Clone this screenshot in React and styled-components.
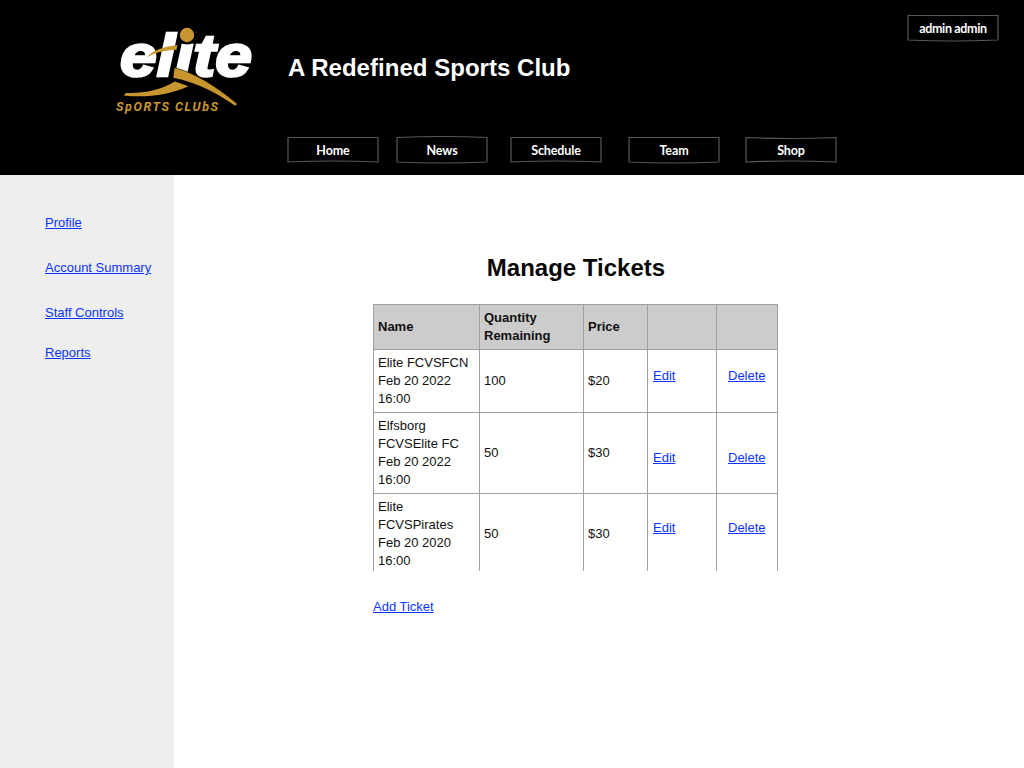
import React from "react";
import styled, { createGlobalStyle } from "styled-components";

const Global = createGlobalStyle`
  * { box-sizing: border-box; }
  body { margin: 0; background: #fff; font-family: "Liberation Sans", Arial, sans-serif; font-size: 13px; line-height: 18px; color: #111; }
  #root { display: flex; }
`;

const Page = styled.div`
  width: 1024px;
  height: 768px;
  display: flex;
  flex-direction: column;
  overflow: hidden;
`;

const Header = styled.header`
  flex: none;
  height: 175px;
  background: #000;
  color: #fff;
  display: flex;
  padding: 14px 25px 0 112px;
`;

const Brand = styled.div`
  width: 176px;
`;

const HeaderMain = styled.div`
  flex: 1;
  padding-top: 38px;
`;

const Tagline = styled.h1`
  margin: 0 0 52px;
  font-size: 24px;
  line-height: 32px;
  letter-spacing: 0.03px;
  white-space: nowrap;
`;

const Nav = styled.nav`
  display: flex;
`;

const SketchButton = styled.button`
  position: relative;
  flex: none;
  width: 92px;
  height: 28px;
  margin: 0 ${(p) => p.$gap || 0}px 0 -1px;
  padding: 2px 0 0;
  border: 0;
  background: none;
  color: #fff;
  font: 700 12.5px/26px Lato, sans-serif;
  letter-spacing: ${(p) => p.$track || 0}px;
  text-align: center;
  white-space: nowrap;
`;

const Outline = styled.svg`
  position: absolute;
  inset: 0;
  overflow: visible;
`;

const Body = styled.div`
  flex: 1;
  display: flex;
`;

const Sidebar = styled.aside`
  width: 174px;
  background: #eee;
  padding: 39px 0 0 45px;
  display: flex;
  flex-direction: column;
  align-items: flex-start;
`;

const Link = styled.a`
  color: #0b35ff;
  text-decoration: underline;
  white-space: nowrap;
`;

const SideLink = styled(Link)`
  margin-bottom: ${(p) => p.$space}px;
`;

const Main = styled.main`
  padding: 77px 0 0 199px;
`;

const Title = styled.h2`
  width: 406px;
  margin: 0 0 20px;
  font-size: 24px;
  line-height: 32px;
  color: #080808;
  text-align: center;
`;

const TableWindow = styled.div`
  height: 267px;
  overflow: hidden;
  margin-bottom: 27px;
`;

const Table = styled.div`
  width: 405px;
  border: 1px solid #a0a0a0;
  border-bottom: 0;
`;

const Row = styled.div`
  display: grid;
  grid-template-columns: 106px 104px 64px 69px 60px;
  height: ${(p) => p.$height}px;
  border-bottom: 1px solid #a0a0a0;
  background: ${(p) => (p.$head ? "#ccc" : "#fff")};
  font-weight: ${(p) => (p.$head ? 700 : 400)};
`;

const Cell = styled.div`
  display: flex;
  align-items: center;
  white-space: pre-line;
  padding-left: 4px;
  border-right: 1px solid #a0a0a0;
  &:last-child { border-right: 0; }
`;

const ActionCell = styled(Cell)`
  align-items: flex-start;
  padding: ${(p) => p.$top}px 0 0 ${(p) => p.$left}px;
`;

const ORANGE = "#c8962f";

function Logo() {
  return (
    <svg width="146" height="106" viewBox="112 14 146 106">
      <text x="120" y="75.5" fill="#fff" stroke="#fff" strokeWidth="2.6" fontFamily="Liberation Sans" fontWeight="700" fontStyle="italic" fontSize="59" textLength="132" lengthAdjust="spacingAndGlyphs">elite</text>
      <circle cx="187" cy="35" r="9.500" fill="#000" />
      <circle cx="187" cy="35" r="7.2" fill={ORANGE} />
      <path d="M146.700 57.500C152 50.500 164 46.500 177.500 45L176.500 49.800C164 50.500 155 52.500 146.700 57.500Z" fill={ORANGE} />
      <path d="M174.300 67.500C195 73 216 86 237.500 104L235 106C216 93 198 83 173 78Z" fill={ORANGE} stroke="#000" strokeWidth="0.6" />
      <path d="M175 81.500L188.500 86.200C168 95 147 98 123.500 95.500L126 93C145 93.500 160 90 175 81.500Z" fill={ORANGE} />
      <text x="116" y="110.500" fill={ORANGE} fontFamily="Roboto" fontWeight="700" fontStyle="italic" fontSize="12.5" textLength="102">SpORTS CLUbS</text>
    </svg>
  );
}

function Sketch({ label, top = 0, bottom = 0, gap, track }) {
  return (
    <SketchButton $gap={gap} $track={track}>
      <Outline width="92" height="28">
        <path
          d={`M1 1.500Q46 ${1.5 + top} 91 1.500V26Q46 ${26 + bottom} 1 26Z`}
          fill="none"
          stroke="#585858"
          strokeWidth="1.2"
          strokeLinejoin="round"
        />
      </Outline>
      {label}
    </SketchButton>
  );
}

const tickets = [
  { name: "Elite FCVSFCN\nFeb 20 2022\n16:00", qty: 100, price: "$20", height: 63, top: 17 },
  { name: "Elfsborg\nFCVSElite FC\nFeb 20 2022\n16:00", qty: 50, price: "$30", height: 81, top: 36 },
  { name: "Elite\nFCVSPirates\nFeb 20 2020\n16:00", qty: 50, price: "$30", height: 81, top: 25 },
];

export default function App() {
  return (
    <Page>
      <Global />
      <Header>
        <Brand><Logo /></Brand>
        <HeaderMain>
          <Tagline>A Redefined Sports Club</Tagline>
          <Nav>
            <Sketch label="Home" bottom={-2} gap={18} track={-0.1} />
            <Sketch label="News" top={-2} bottom={2} gap={23} track={-0.1} />
            <Sketch label="Schedule" bottom={-2} gap={27} track={-0.1} />
            <Sketch label="Team" bottom={2} gap={26} track={-0.1} />
            <Sketch label="Shop" top={2} bottom={-2} track={-0.1} />
          </Nav>
        </HeaderMain>
        <Sketch label="admin admin" bottom={2} track={-0.35} />
      </Header>
      <Body>
        <Sidebar>
          <SideLink $space={27}>Profile</SideLink>
          <SideLink $space={27}>Account Summary</SideLink>
          <SideLink $space={22}>Staff Controls</SideLink>
          <SideLink $space={0}>Reports</SideLink>
        </Sidebar>
        <Main>
          <Title>Manage Tickets</Title>
          <TableWindow>
            <Table>
              <Row $head $height={45}>
                <Cell>Name</Cell>
                <Cell>{"Quantity\nRemaining"}</Cell>
                <Cell>Price</Cell>
                <Cell />
                <Cell />
              </Row>
              {tickets.map((t) => (
                <Row key={t.name} $height={t.height}>
                  <Cell>{t.name}</Cell>
                  <Cell>{t.qty}</Cell>
                  <Cell>{t.price}</Cell>
                  <ActionCell $top={t.top} $left={5}><Link>Edit</Link></ActionCell>
                  <ActionCell $top={t.top} $left={11}><Link>Delete</Link></ActionCell>
                </Row>
              ))}
            </Table>
          </TableWindow>
          <Link>Add Ticket</Link>
        </Main>
      </Body>
    </Page>
  );
}
